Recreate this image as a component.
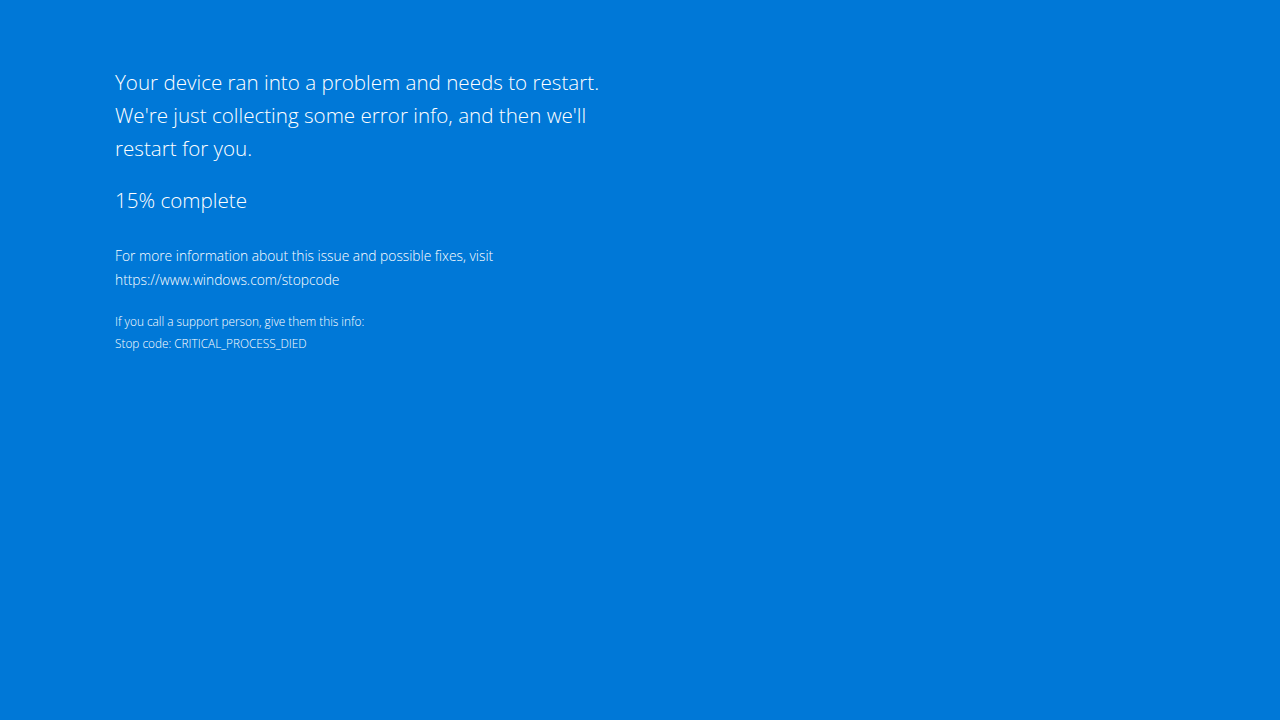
export default function App() {
  return (
    <div
      className="w-[1280px] h-[720px] bg-[#0078d7] text-white pl-[115px] pt-[66px]"
      style={{ fontFamily: '"Open Sans", "Noto Sans", sans-serif' }}
    >
      <div className="font-light text-[20.6px] leading-[33px]">
        <p>Your device ran into a problem and needs to restart.</p>
        <p>We're just collecting some error info, and then we'll</p>
        <p>restart for you.</p>
      </div>
      <p className="font-light text-[20.6px] leading-[33px] mt-[19px]">15% complete</p>
      <div className="font-light text-[13.8px] leading-[24px] mt-[27px]">
        <p>For more information about this issue and possible fixes, visit</p>
        <p>https://www.windows.com/stopcode</p>
      </div>
      <div className="font-light text-[11.8px] leading-[22px] mt-[18px]">
        <p>If you call a support person, give them this info:</p>
        <p>Stop code: CRITICAL_PROCESS_DIED</p>
      </div>
    </div>
  );
}
